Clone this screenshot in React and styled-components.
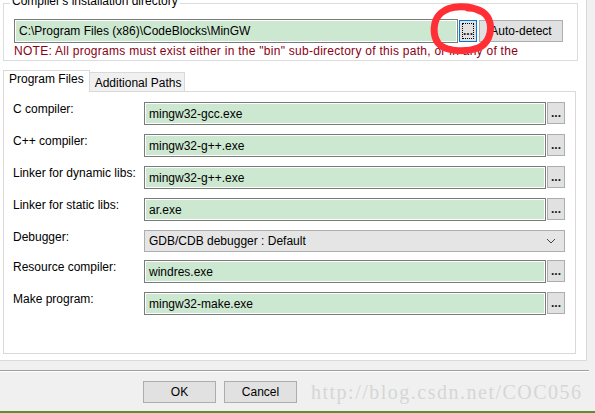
import React from "react";
import styled, { createGlobalStyle } from "styled-components";

const Global = createGlobalStyle`
  html, body { margin: 0; padding: 0; background: #f0f0f0; }
  body {
    font-family: "Liberation Sans", Arial, sans-serif;
    font-size: 12px;
    color: #000;
    overflow: hidden;
  }
  #root { width: 595px; height: 413px; }
  * { box-sizing: border-box; }
`;

const Window = styled.div`
  position: relative;
  width: 595px;
  height: 413px;
  display: flex;
  flex-direction: column;
  background: #f0f0f0;
  overflow: hidden;
`;

const Pane = styled.div`
  width: 587px;
  height: 361px;
  background: #fff;
  border-right: 1px solid #dadada;
  border-bottom: 1px solid #dadada;
  padding: 3px 8px 0 3px;
  display: flex;
  flex-direction: column;
`;

const GroupBox = styled.div`
  position: relative;
  height: 58px;
  border: 1px solid #dcdcdc;
  padding: 15px 14px 0 10px;
`;

const Legend = styled.div`
  position: absolute;
  top: -10px;
  left: 6px;
  padding: 0 2px;
  background: #fff;
  line-height: 14px;
  white-space: nowrap;
`;

const PathRow = styled.div`
  display: flex;
  align-items: center;
  height: 24px;
`;

const Field = styled.div`
  flex: 1;
  height: ${(p) => p.$h || 23}px;
  border: 1px solid #7a7a7a;
  box-shadow: inset 0 0 0 1px #fff;
  background: #cde8d1;
  padding-left: 4px;
  display: flex;
  align-items: center;
  white-space: nowrap;
  overflow: hidden;
`;

const DotsButton = styled.div`
  position: relative;
  flex: none;
  width: 18px;
  height: 22px;
  margin-left: ${(p) => p.$gap || 1}px;
  background: #e1e1e1;
  border: 1px solid ${(p) => (p.$focused ? "#0078d7" : "#adadad")};
  font-weight: bold;
  font-size: 12px;
  line-height: 12px;
  display: flex;
  align-items: flex-end;
  justify-content: center;
  padding-bottom: 4px;
  color: #1a1a1a;
  &::after {
    content: "";
    display: ${(p) => (p.$focused ? "block" : "none")};
    position: absolute;
    inset: 2px;
    border: 1px dotted #000;
  }
`;

const Button = styled.div`
  flex: none;
  width: ${(p) => p.$w}px;
  height: 22px;
  margin-left: ${(p) => p.$gap || 0}px;
  background: #e1e1e1;
  border: 1px solid #adadad;
  display: flex;
  align-items: center;
  justify-content: center;
  font-size: ${(p) => p.$fs || 12}px;
`;

const Note = styled.div`
  margin-top: 1px;
  line-height: 14px;
  color: #8b0014;
  letter-spacing: 0.27px;
  white-space: nowrap;
  overflow: hidden;
`;

const Tabs = styled.div`
  margin-top: 9px;
  margin-right: 2px;
  display: flex;
  flex-direction: column;
`;

const TabStrip = styled.div`
  display: flex;
  align-items: flex-end;
  height: 22px;
  margin-bottom: -1px;
  position: relative;
  z-index: 1;
`;

const Tab = styled.div`
  height: ${(p) => (p.$active ? 22 : 20)}px;
  padding: ${(p) => (p.$active ? "1px 5px 0 5px" : "3px 3px 0 5px")};
  line-height: 14px;
  border: 1px solid #d9d9d9;
  border-bottom: ${(p) => (p.$active ? "none" : "1px solid #d9d9d9")};
  border-left: ${(p) => (p.$active ? "1px solid #d9d9d9" : "none")};
  background: ${(p) => (p.$active ? "#fff" : "#f0f0f0")};
  white-space: nowrap;
`;

const TabPanel = styled.div`
  height: 263px;
  border: 1px solid #d9d9d9;
  background: #fff;
  padding: 10px 10px 0 9px;
  display: flex;
  flex-direction: column;
`;

const Row = styled.div`
  display: flex;
  align-items: flex-start;
  height: ${(p) => p.$pitch || 32}px;
`;

const Label = styled.div`
  flex: none;
  width: 131px;
  line-height: 14px;
  white-space: nowrap;
`;

const Select = styled.div`
  flex: 1;
  height: 22px;
  background: #e5e5e5;
  border: 1px solid #adadad;
  padding: 0 8px 0 4px;
  display: flex;
  align-items: center;
  justify-content: space-between;
`;

const Footer = styled.div`
  flex: 1;
  display: flex;
  flex-direction: column;
`;

const Separator = styled.div`
  margin-top: 9px;
  width: 589px;
  height: 2px;
  border-top: 1px solid #a0a0a0;
  border-bottom: 1px solid #fff;
`;

const ButtonRow = styled.div`
  margin-top: 9px;
  padding-left: 143px;
  display: flex;
  align-items: center;
  height: 22px;
`;

const Watermark = styled.div`
  margin-left: 14px;
  font-family: "Liberation Serif", "Times New Roman", serif;
  font-size: 20px;
  letter-spacing: 1.5px;
  line-height: 22px;
  color: #d6d6d6;
  white-space: nowrap;
`;

const EdgeLine = styled.div`
  margin-top: auto;
  height: 2px;
  background: #5e8e2e;
`;

const Mark = styled.svg`
  position: absolute;
  left: 428px;
  top: 3px;
  pointer-events: none;
`;

const Chevron = () => (
  <svg width="10" height="6" viewBox="0 0 10 6">
    <polyline points="1,1 5,5 9,1" fill="none" stroke="#444" strokeWidth="1" />
  </svg>
);

const tools = [
  { label: "C compiler:", value: "mingw32-gcc.exe" },
  { label: "C++ compiler:", value: "mingw32-g++.exe" },
  { label: "Linker for dynamic libs:", value: "mingw32-g++.exe" },
  { label: "Linker for static libs:", value: "ar.exe" },
  { label: "Debugger:", value: "GDB/CDB debugger : Default", select: true },
  { label: "Resource compiler:", value: "windres.exe" },
  { label: "Make program:", value: "mingw32-make.exe" },
];

export default function App() {
  return (
    <>
      <Global />
      <Window>
        <Pane>
          <GroupBox>
            <Legend>Compiler's installation directory</Legend>
            <PathRow>
              <Field $h={24}>C:\Program Files (x86)\CodeBlocks\MinGW</Field>
              <DotsButton $focused>...</DotsButton>
              <Button $w={84} $gap={2}>Auto-detect</Button>
            </PathRow>
            <Note>
              NOTE: All programs must exist either in the "bin" sub-directory of this path, or in any of the
            </Note>
          </GroupBox>
          <Tabs>
            <TabStrip>
              <Tab $active>Program Files</Tab>
              <Tab>Additional Paths</Tab>
            </TabStrip>
            <TabPanel>
              {tools.map((t) => (
                <Row key={t.label} $pitch={t.select ? 30 : 32}>
                  <Label>{t.label}</Label>
                  {t.select ? (
                    <Select>
                      <span>{t.value}</span>
                      <Chevron />
                    </Select>
                  ) : (
                    <>
                      <Field>{t.value}</Field>
                      <DotsButton>...</DotsButton>
                    </>
                  )}
                </Row>
              ))}
            </TabPanel>
          </Tabs>
        </Pane>
        <Footer>
          <Separator />
          <ButtonRow>
            <Button $w={73}>OK</Button>
            <Button $w={73} $gap={8}>Cancel</Button>
            <Watermark>http://blog.csdn.net/COC056</Watermark>
          </ButtonRow>
          <EdgeLine />
        </Footer>
        <Mark width="68" height="54" viewBox="0 0 68 54">
          <path
            d="M52 8 C42 2, 22 2, 13 10 C5 17, 4 31, 10 40 C16 48, 36 50, 50 45 C60 41, 64 30, 62 20 C60 11, 52 5, 40 5"
            fill="none"
            stroke="#ff2f35"
            strokeWidth="7"
            strokeLinecap="round"
          />
        </Mark>
      </Window>
    </>
  );
}
